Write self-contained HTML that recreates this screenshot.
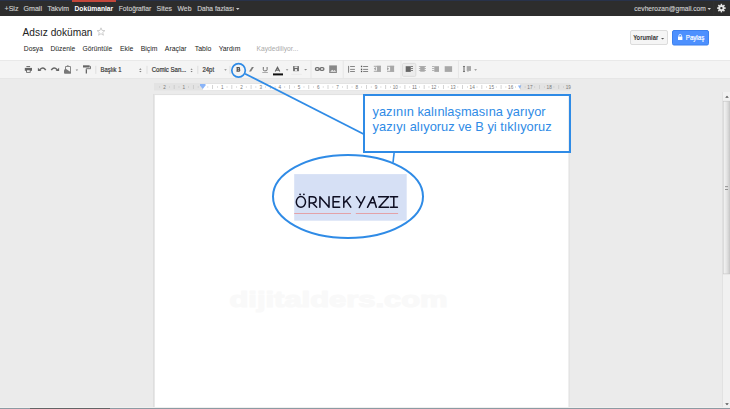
<!DOCTYPE html>
<html><head><meta charset="utf-8">
<style>
*{margin:0;padding:0}
html,body{width:730px;height:409px;overflow:hidden;background:#ebebeb}
svg{display:block;font-family:"Liberation Sans",sans-serif}
</style></head><body>
<svg width="730" height="409" viewBox="0 0 730 409">
<rect x="0" y="0" width="730" height="409" fill="#ebebeb"/>
<rect x="0" y="0" width="730" height="16" fill="#2d2d2d"/>
<rect x="0" y="0" width="730" height="1" fill="#28324a"/>
<rect x="72" y="0" width="44" height="2" fill="#c4473b"/>
<rect x="0" y="16" width="730" height="44" fill="#ffffff"/>
<rect x="0" y="60" width="730" height="18" fill="#f4f4f4"/>
<rect x="0" y="60" width="730" height="1" fill="#e9e9e9"/>
<rect x="0" y="78" width="730" height="1" fill="#e6e6e6"/>
<text x="4.5" y="11" font-size="7.8" fill="#cfcfcf" font-weight="normal" textLength="14" lengthAdjust="spacingAndGlyphs" stroke="#cfcfcf" stroke-width="0.15">+Siz</text>
<text x="23.5" y="11" font-size="7.8" fill="#cfcfcf" font-weight="normal" textLength="18.5" lengthAdjust="spacingAndGlyphs" stroke="#cfcfcf" stroke-width="0.15">Gmail</text>
<text x="47.5" y="11" font-size="7.8" fill="#cfcfcf" font-weight="normal" textLength="21.5" lengthAdjust="spacingAndGlyphs" stroke="#cfcfcf" stroke-width="0.15">Takvim</text>
<text x="118.7" y="11" font-size="7.8" fill="#cfcfcf" font-weight="normal" textLength="32.5" lengthAdjust="spacingAndGlyphs" stroke="#cfcfcf" stroke-width="0.15">Fotoğraflar</text>
<text x="156.6" y="11" font-size="7.8" fill="#cfcfcf" font-weight="normal" textLength="15.5" lengthAdjust="spacingAndGlyphs" stroke="#cfcfcf" stroke-width="0.15">Sites</text>
<text x="177.5" y="11" font-size="7.8" fill="#cfcfcf" font-weight="normal" textLength="14" lengthAdjust="spacingAndGlyphs" stroke="#cfcfcf" stroke-width="0.15">Web</text>
<text x="197.2" y="11" font-size="7.8" fill="#cfcfcf" font-weight="normal" textLength="36.9" lengthAdjust="spacingAndGlyphs" stroke="#cfcfcf" stroke-width="0.15">Daha fazlası</text>
<text x="634.3" y="11" font-size="7.8" fill="#cfcfcf" font-weight="normal" textLength="71.5" lengthAdjust="spacingAndGlyphs" stroke="#cfcfcf" stroke-width="0.15">cevherozan@gmail.com</text>
<text x="74.5" y="11" font-size="7.8" fill="#ffffff" font-weight="bold" textLength="38.7" lengthAdjust="spacingAndGlyphs">Dokümanlar</text>
<path d="M236 8h3.5l-1.75 2z" fill="#cfcfcf" stroke="none" stroke-width="1"/>
<path d="M707.5 8h3.5l-1.75 2z" fill="#cfcfcf" stroke="none" stroke-width="1"/>
<g transform="translate(721.4 8.1)"><circle r="2.15" fill="none" stroke="#e6e6e6" stroke-width="1.9"/><rect x="-0.75" y="-4.3" width="1.5" height="2" fill="#e6e6e6" transform="rotate(0)"/><rect x="-0.75" y="-4.3" width="1.5" height="2" fill="#e6e6e6" transform="rotate(45)"/><rect x="-0.75" y="-4.3" width="1.5" height="2" fill="#e6e6e6" transform="rotate(90)"/><rect x="-0.75" y="-4.3" width="1.5" height="2" fill="#e6e6e6" transform="rotate(135)"/><rect x="-0.75" y="-4.3" width="1.5" height="2" fill="#e6e6e6" transform="rotate(180)"/><rect x="-0.75" y="-4.3" width="1.5" height="2" fill="#e6e6e6" transform="rotate(225)"/><rect x="-0.75" y="-4.3" width="1.5" height="2" fill="#e6e6e6" transform="rotate(270)"/><rect x="-0.75" y="-4.3" width="1.5" height="2" fill="#e6e6e6" transform="rotate(315)"/></g>
<rect x="713.3" y="1" width="1" height="14" fill="#333"/>
<text x="22.5" y="35.8" font-size="10.3" fill="#222" font-weight="normal" textLength="70" lengthAdjust="spacingAndGlyphs">Adsız doküman</text>
<path d="M101.00 27.80 L102.06 30.44 L104.90 30.63 L102.71 32.46 L103.41 35.22 L101.00 33.70 L98.59 35.22 L99.29 32.46 L97.10 30.63 L99.94 30.44z" fill="none" stroke="#c8c8c8" stroke-width="0.9"/>
<text x="23.8" y="51" font-size="7.2" fill="#222" font-weight="normal" textLength="19.1" lengthAdjust="spacingAndGlyphs">Dosya</text>
<text x="50.5" y="51" font-size="7.2" fill="#222" font-weight="normal" textLength="24.7" lengthAdjust="spacingAndGlyphs">Düzenle</text>
<text x="82.6" y="51" font-size="7.2" fill="#222" font-weight="normal" textLength="29.6" lengthAdjust="spacingAndGlyphs">Görüntüle</text>
<text x="119.89999999999999" y="51" font-size="7.2" fill="#222" font-weight="normal" textLength="13.4" lengthAdjust="spacingAndGlyphs">Ekle</text>
<text x="140.7" y="51" font-size="7.2" fill="#222" font-weight="normal" textLength="16.7" lengthAdjust="spacingAndGlyphs">Biçim</text>
<text x="164.79999999999998" y="51" font-size="7.2" fill="#222" font-weight="normal" textLength="21.8" lengthAdjust="spacingAndGlyphs">Araçlar</text>
<text x="194.7" y="51" font-size="7.2" fill="#222" font-weight="normal" textLength="16.6" lengthAdjust="spacingAndGlyphs">Tablo</text>
<text x="218.7" y="51" font-size="7.2" fill="#222" font-weight="normal" textLength="21.7" lengthAdjust="spacingAndGlyphs">Yardım</text>
<text x="256.5" y="51" font-size="7.2" fill="#aaaaaa" font-weight="normal" textLength="41.8" lengthAdjust="spacingAndGlyphs">Kaydediliyor...</text>
<rect x="630.5" y="30.5" width="37" height="14" fill="#f5f5f5" stroke="#dcdcdc" stroke-width="1" rx="1.5"/>
<text x="633.2" y="39.8" font-size="6.6" fill="#333" font-weight="bold" textLength="25" lengthAdjust="spacingAndGlyphs">Yorumlar</text>
<path d="M661 38h3.2l-1.6 1.6z" fill="#555" stroke="none" stroke-width="1"/>
<rect x="672.5" y="30.5" width="36" height="14.5" fill="#4d90fe" stroke="#3d80ee" stroke-width="1" rx="1.5"/>
<text x="685.8" y="39.8" font-size="6.8" fill="#ffffff" font-weight="normal" textLength="18.4" lengthAdjust="spacingAndGlyphs" stroke="#fff" stroke-width="0.2">Paylaş</text>
<rect x="678" y="36.6" width="4.4" height="3.4" fill="#fff"/>
<path d="M678.9 36.8v-1.1a1.3 1.3 0 0 1 2.6 0v1.1" fill="none" stroke="#fff" stroke-width="0.8"/>
<rect x="26.4" y="66.1" width="3.7" height="1" fill="#666666"/>
<rect x="24.8" y="67.9" width="7.2" height="2.9" fill="#666666"/>
<rect x="26.6" y="69.9" width="3.6" height="2.4" fill="#fff" stroke="#555" stroke-width="0.8"/>
<path d="M37.9 67.8v3.1h3.5z" fill="#666666" stroke="none" stroke-width="1"/>
<path d="M39.8 69.7c2.2-2.2 4.4-2.2 5.9 0.5" fill="none" stroke="#666666" stroke-width="1.5"/>
<path d="M59.1 67.8v3.1h-3.5z" fill="#666666" stroke="none" stroke-width="1"/>
<path d="M57.2 69.7c-2.2-2.2-4.4-2.2-5.9 0.5" fill="none" stroke="#666666" stroke-width="1.5"/>
<path d="M65.5 69.8v-3.3h5v6.6h-5.6" fill="none" stroke="#888" stroke-width="1"/>
<path d="M66.3 66.3l1.5-1.3 1.5 1.3z" fill="#888" stroke="none" stroke-width="1"/>
<path d="M64 70.2l1.4-1.8 5.6 3.8v1.4h-7z" fill="#777" stroke="none" stroke-width="1"/>
<path d="M75.6 69.4h2.6l-1.3 1.5z" fill="#8a8a8a" stroke="none" stroke-width="1"/>
<rect x="83" y="65.3" width="6.6" height="2.2" fill="#666666"/>
<path d="M89.6 66.4h0.9v2.3h-4.2v1.2" fill="none" stroke="#666666" stroke-width="0.9"/>
<rect x="85.7" y="69.6" width="1.3" height="3.9" fill="#666666"/>
<rect x="95.3" y="65.8" width="1" height="8" fill="#dedede"/>
<rect x="146.5" y="65.8" width="1" height="8" fill="#dedede"/>
<rect x="197.3" y="65.8" width="1" height="8" fill="#dedede"/>
<rect x="229.5" y="65.8" width="1" height="8" fill="#dedede"/>
<rect x="310.5" y="60" width="1" height="18" fill="#e6e6e6"/>
<rect x="342.7" y="60" width="1" height="18" fill="#e6e6e6"/>
<rect x="400.5" y="60" width="1" height="18" fill="#e6e6e6"/>
<rect x="457.9" y="60" width="1" height="18" fill="#e6e6e6"/>
<text x="100.6" y="72.1" font-size="6.6" fill="#333" font-weight="normal" textLength="20.8" lengthAdjust="spacingAndGlyphs" stroke="#333" stroke-width="0.18">Başlık 1</text>
<path d="M139.1 69.7l1.25-1.4 1.25 1.4zM139.1 70.9l1.25 1.4 1.25-1.4z" fill="#777" stroke="none" stroke-width="1"/>
<text x="151.7" y="72.1" font-size="6.6" fill="#333" font-weight="normal" textLength="34.6" lengthAdjust="spacingAndGlyphs" stroke="#333" stroke-width="0.18">Comic San...</text>
<path d="M190.5 69.7l1.1-1.3 1.1 1.3zM190.5 70.9l1.1 1.3 1.1-1.3z" fill="#777" stroke="none" stroke-width="1"/>
<text x="202.5" y="72.1" font-size="6.6" fill="#333" font-weight="normal" textLength="11.6" lengthAdjust="spacingAndGlyphs" stroke="#333" stroke-width="0.18">24pt</text>
<path d="M224.2 69.3h2.6l-1.3 1.5z" fill="#8a8a8a" stroke="none" stroke-width="1"/>
<path d="M237.2 66.9V71.6M236.5 67.45H239A1 1 0 0 1 239 69.25H237.2M237.2 69.25H239.3A1.15 1.15 0 0 1 239.3 71.05H236.5" fill="none" stroke="#505050" stroke-width="1.15"/>
<path d="M251.9 67.1h2l-2.8 4.5h-2z" fill="#7a7a7a" stroke="none" stroke-width="1"/>
<path d="M263.3 67v2.7q0 1.1 1.1 1.1h1.6q1.1 0 1.1-1.1V67" fill="none" stroke="#6e6e6e" stroke-width="1.0"/>
<rect x="262.3" y="72" width="5.6" height="0.7" fill="#8a8a8a"/>
<path d="M275.2 71.5l2.3-4.3 2.3 4.3M276.1 70.1h2.8" fill="none" stroke="#666" stroke-width="1.1"/>
<rect x="273" y="73.4" width="10" height="2" fill="#111"/>
<path d="M285.8 69.2h2.6l-1.3 1.5z" fill="#8a8a8a" stroke="none" stroke-width="1"/>
<rect x="293.1" y="66.1" width="5.8" height="5.1" fill="#6a6a6a"/>
<rect x="294.5" y="66.5" width="3" height="1.4" fill="#f2f2f2"/>
<rect x="294.9" y="69.1" width="2.2" height="1.8" fill="#f2f2f2"/>
<rect x="291.2" y="73.8" width="10.7" height="1.1" fill="#ececec"/>
<path d="M304.1 69h3l-1.5 1.6z" fill="#8a8a8a" stroke="none" stroke-width="1"/>
<g fill="none" stroke="#707070" stroke-width="1.3"><rect x="315.4" y="67.7" width="3.8" height="2.7" rx="1.35"/><rect x="320.1" y="67.7" width="3.8" height="2.7" rx="1.35"/></g>
<rect x="318.6" y="68.6" width="2.1" height="0.9" fill="#707070"/>
<rect x="329.2" y="65.4" width="7.7" height="7.6" fill="#888"/>
<path d="M330.2 71.8l2-2 1.3 1.1 1.2-1 1.4 1.9z" fill="#eee" stroke="none" stroke-width="1"/>
<rect x="350.1" y="66.0" width="4.8" height="0.9" fill="#7a7a7a"/>
<rect x="350.1" y="68.9" width="4.8" height="0.9" fill="#7a7a7a"/>
<rect x="350.1" y="71.0" width="4.8" height="0.9" fill="#7a7a7a"/>
<rect x="348" y="65.9" width="1.1" height="6.8" fill="#888"/>
<rect x="360.9" y="65.75" width="1.3" height="1.4" fill="#555"/>
<rect x="363.1" y="66.0" width="5" height="0.9" fill="#7a7a7a"/>
<rect x="360.9" y="68.65" width="1.3" height="1.4" fill="#555"/>
<rect x="363.1" y="68.9" width="5" height="0.9" fill="#7a7a7a"/>
<rect x="360.9" y="70.75" width="1.3" height="1.4" fill="#555"/>
<rect x="363.1" y="71.0" width="5" height="0.9" fill="#7a7a7a"/>
<rect x="373.8" y="65.8" width="7.1" height="1" fill="#a8a8a8"/>
<rect x="373.8" y="70.8" width="7.1" height="1" fill="#a8a8a8"/>
<rect x="376.90000000000003" y="65.8" width="4" height="6" fill="#a8a8a8"/>
<path d="M375.8 67.1L373.90000000000003 68.8L375.8 70.5z" fill="#999" stroke="none" stroke-width="1"/>
<rect x="387.0" y="65.8" width="7.1" height="1" fill="#a8a8a8"/>
<rect x="387.0" y="70.8" width="7.1" height="1" fill="#a8a8a8"/>
<rect x="390.1" y="65.8" width="4" height="6" fill="#a8a8a8"/>
<path d="M387.1 67.1L389.0 68.8L387.1 70.5z" fill="#999" stroke="none" stroke-width="1"/>
<rect x="402.5" y="63.4" width="13.3" height="13" fill="#ececec" stroke="#d8d8d8" stroke-width="0.8" rx="1.2"/>
<rect x="405.7" y="66.2" width="5.1" height="5.7" fill="#666"/>
<rect x="410.8" y="66.2" width="2.2" height="0.8" fill="#666"/>
<rect x="410.8" y="68.1" width="2.2" height="0.8" fill="#666"/>
<rect x="410.8" y="70.0" width="2.2" height="0.8" fill="#666"/>
<rect x="420.2" y="66.2" width="4.5" height="5.5" fill="#a8a8a8"/>
<rect x="418.9" y="66.2" width="7.1" height="0.8" fill="#a8a8a8"/>
<rect x="418.9" y="68.1" width="7.1" height="0.8" fill="#a8a8a8"/>
<rect x="418.9" y="70.0" width="7.1" height="0.8" fill="#a8a8a8"/>
<rect x="434.3" y="66.2" width="4.7" height="5.7" fill="#a8a8a8"/>
<rect x="432" y="66.2" width="2.4" height="0.8" fill="#a8a8a8"/>
<rect x="432" y="68.1" width="2.4" height="0.8" fill="#a8a8a8"/>
<rect x="432" y="70.0" width="2.4" height="0.8" fill="#a8a8a8"/>
<rect x="444.7" y="66.2" width="7.4" height="5.7" fill="#a8a8a8"/>
<rect x="466.7" y="66.1" width="4.3" height="4.8" fill="#a8a8a8"/>
<rect x="467.1" y="70.9" width="1.6" height="0.7" fill="#a8a8a8"/>
<rect x="463.55" y="66.5" width="0.9" height="5" fill="#555"/>
<path d="M462.8 67.1h2.4l-1.2-1.25z" fill="#555" stroke="none" stroke-width="1"/>
<path d="M462.8 70.9h2.4l-1.2 1.25z" fill="#555" stroke="none" stroke-width="1"/>
<path d="M474.2 69.3h2.8l-1.4 1.5z" fill="#8a8a8a" stroke="none" stroke-width="1"/>
<rect x="154" y="83" width="416" height="7.5" fill="#e3e3e3"/>
<rect x="203" y="84" width="317" height="6" fill="#ffffff"/>
<text x="163.24" y="88.8" font-size="5.6" fill="#777" font-weight="normal" textLength="2.6" lengthAdjust="spacingAndGlyphs">2</text>
<text x="182.47" y="88.8" font-size="5.6" fill="#777" font-weight="normal" textLength="2.6" lengthAdjust="spacingAndGlyphs">1</text>
<text x="220.93" y="88.8" font-size="5.6" fill="#777" font-weight="normal" textLength="2.6" lengthAdjust="spacingAndGlyphs">1</text>
<text x="240.16" y="88.8" font-size="5.6" fill="#777" font-weight="normal" textLength="2.6" lengthAdjust="spacingAndGlyphs">2</text>
<text x="259.39" y="88.8" font-size="5.6" fill="#777" font-weight="normal" textLength="2.6" lengthAdjust="spacingAndGlyphs">3</text>
<text x="278.62" y="88.8" font-size="5.6" fill="#777" font-weight="normal" textLength="2.6" lengthAdjust="spacingAndGlyphs">4</text>
<text x="297.85" y="88.8" font-size="5.6" fill="#777" font-weight="normal" textLength="2.6" lengthAdjust="spacingAndGlyphs">5</text>
<text x="317.08" y="88.8" font-size="5.6" fill="#777" font-weight="normal" textLength="2.6" lengthAdjust="spacingAndGlyphs">6</text>
<text x="336.31" y="88.8" font-size="5.6" fill="#777" font-weight="normal" textLength="2.6" lengthAdjust="spacingAndGlyphs">7</text>
<text x="355.54" y="88.8" font-size="5.6" fill="#777" font-weight="normal" textLength="2.6" lengthAdjust="spacingAndGlyphs">8</text>
<text x="374.77" y="88.8" font-size="5.6" fill="#777" font-weight="normal" textLength="2.6" lengthAdjust="spacingAndGlyphs">9</text>
<text x="392.7" y="88.8" font-size="5.6" fill="#777" font-weight="normal" textLength="5.2" lengthAdjust="spacingAndGlyphs">10</text>
<text x="411.93" y="88.8" font-size="5.6" fill="#777" font-weight="normal" textLength="5.2" lengthAdjust="spacingAndGlyphs">11</text>
<text x="431.16" y="88.8" font-size="5.6" fill="#777" font-weight="normal" textLength="5.2" lengthAdjust="spacingAndGlyphs">12</text>
<text x="450.39" y="88.8" font-size="5.6" fill="#777" font-weight="normal" textLength="5.2" lengthAdjust="spacingAndGlyphs">13</text>
<text x="469.62" y="88.8" font-size="5.6" fill="#777" font-weight="normal" textLength="5.2" lengthAdjust="spacingAndGlyphs">14</text>
<text x="488.85" y="88.8" font-size="5.6" fill="#777" font-weight="normal" textLength="5.2" lengthAdjust="spacingAndGlyphs">15</text>
<text x="508.08" y="88.8" font-size="5.6" fill="#777" font-weight="normal" textLength="5.2" lengthAdjust="spacingAndGlyphs">16</text>
<text x="527.31" y="88.8" font-size="5.6" fill="#777" font-weight="normal" textLength="5.2" lengthAdjust="spacingAndGlyphs">17</text>
<text x="546.54" y="88.8" font-size="5.6" fill="#777" font-weight="normal" textLength="5.2" lengthAdjust="spacingAndGlyphs">18</text>
<text x="565.77" y="88.8" font-size="5.6" fill="#777" font-weight="normal" textLength="5.2" lengthAdjust="spacingAndGlyphs">19</text>
<rect x="173.75" y="85" width="0.8" height="4" fill="#c8c8c8"/>
<rect x="192.98" y="85" width="0.8" height="4" fill="#c8c8c8"/>
<rect x="212.22" y="85" width="0.8" height="4" fill="#c8c8c8"/>
<rect x="231.44" y="85" width="0.8" height="4" fill="#c8c8c8"/>
<rect x="250.67" y="85" width="0.8" height="4" fill="#c8c8c8"/>
<rect x="269.91" y="85" width="0.8" height="4" fill="#c8c8c8"/>
<rect x="289.13" y="85" width="0.8" height="4" fill="#c8c8c8"/>
<rect x="308.37" y="85" width="0.8" height="4" fill="#c8c8c8"/>
<rect x="327.6" y="85" width="0.8" height="4" fill="#c8c8c8"/>
<rect x="346.83" y="85" width="0.8" height="4" fill="#c8c8c8"/>
<rect x="366.06" y="85" width="0.8" height="4" fill="#c8c8c8"/>
<rect x="385.29" y="85" width="0.8" height="4" fill="#c8c8c8"/>
<rect x="404.51" y="85" width="0.8" height="4" fill="#c8c8c8"/>
<rect x="423.75" y="85" width="0.8" height="4" fill="#c8c8c8"/>
<rect x="442.98" y="85" width="0.8" height="4" fill="#c8c8c8"/>
<rect x="462.21" y="85" width="0.8" height="4" fill="#c8c8c8"/>
<rect x="481.44" y="85" width="0.8" height="4" fill="#c8c8c8"/>
<rect x="500.67" y="85" width="0.8" height="4" fill="#c8c8c8"/>
<rect x="519.9" y="85" width="0.8" height="4" fill="#c8c8c8"/>
<rect x="539.13" y="85" width="0.8" height="4" fill="#c8c8c8"/>
<rect x="558.36" y="85" width="0.8" height="4" fill="#c8c8c8"/>
<rect x="159.33" y="86.4" width="0.8" height="1.2" fill="#c4c4c4"/>
<rect x="168.95" y="86.4" width="0.8" height="1.2" fill="#c4c4c4"/>
<rect x="178.56" y="86.4" width="0.8" height="1.2" fill="#c4c4c4"/>
<rect x="188.18" y="86.4" width="0.8" height="1.2" fill="#c4c4c4"/>
<rect x="197.79" y="86.4" width="0.8" height="1.2" fill="#c4c4c4"/>
<rect x="207.41" y="86.4" width="0.8" height="1.2" fill="#c4c4c4"/>
<rect x="217.02" y="86.4" width="0.8" height="1.2" fill="#c4c4c4"/>
<rect x="226.64" y="86.4" width="0.8" height="1.2" fill="#c4c4c4"/>
<rect x="236.25" y="86.4" width="0.8" height="1.2" fill="#c4c4c4"/>
<rect x="245.87" y="86.4" width="0.8" height="1.2" fill="#c4c4c4"/>
<rect x="255.48" y="86.4" width="0.8" height="1.2" fill="#c4c4c4"/>
<rect x="265.1" y="86.4" width="0.8" height="1.2" fill="#c4c4c4"/>
<rect x="274.71" y="86.4" width="0.8" height="1.2" fill="#c4c4c4"/>
<rect x="284.33" y="86.4" width="0.8" height="1.2" fill="#c4c4c4"/>
<rect x="293.94" y="86.4" width="0.8" height="1.2" fill="#c4c4c4"/>
<rect x="303.56" y="86.4" width="0.8" height="1.2" fill="#c4c4c4"/>
<rect x="313.17" y="86.4" width="0.8" height="1.2" fill="#c4c4c4"/>
<rect x="322.79" y="86.4" width="0.8" height="1.2" fill="#c4c4c4"/>
<rect x="332.4" y="86.4" width="0.8" height="1.2" fill="#c4c4c4"/>
<rect x="342.02" y="86.4" width="0.8" height="1.2" fill="#c4c4c4"/>
<rect x="351.63" y="86.4" width="0.8" height="1.2" fill="#c4c4c4"/>
<rect x="361.25" y="86.4" width="0.8" height="1.2" fill="#c4c4c4"/>
<rect x="370.86" y="86.4" width="0.8" height="1.2" fill="#c4c4c4"/>
<rect x="380.48" y="86.4" width="0.8" height="1.2" fill="#c4c4c4"/>
<rect x="390.09" y="86.4" width="0.8" height="1.2" fill="#c4c4c4"/>
<rect x="399.71" y="86.4" width="0.8" height="1.2" fill="#c4c4c4"/>
<rect x="409.32" y="86.4" width="0.8" height="1.2" fill="#c4c4c4"/>
<rect x="418.94" y="86.4" width="0.8" height="1.2" fill="#c4c4c4"/>
<rect x="428.55" y="86.4" width="0.8" height="1.2" fill="#c4c4c4"/>
<rect x="438.17" y="86.4" width="0.8" height="1.2" fill="#c4c4c4"/>
<rect x="447.78" y="86.4" width="0.8" height="1.2" fill="#c4c4c4"/>
<rect x="457.4" y="86.4" width="0.8" height="1.2" fill="#c4c4c4"/>
<rect x="467.01" y="86.4" width="0.8" height="1.2" fill="#c4c4c4"/>
<rect x="476.63" y="86.4" width="0.8" height="1.2" fill="#c4c4c4"/>
<rect x="486.24" y="86.4" width="0.8" height="1.2" fill="#c4c4c4"/>
<rect x="495.86" y="86.4" width="0.8" height="1.2" fill="#c4c4c4"/>
<rect x="505.47" y="86.4" width="0.8" height="1.2" fill="#c4c4c4"/>
<rect x="515.09" y="86.4" width="0.8" height="1.2" fill="#c4c4c4"/>
<rect x="524.7" y="86.4" width="0.8" height="1.2" fill="#c4c4c4"/>
<rect x="534.32" y="86.4" width="0.8" height="1.2" fill="#c4c4c4"/>
<rect x="543.93" y="86.4" width="0.8" height="1.2" fill="#c4c4c4"/>
<rect x="553.55" y="86.4" width="0.8" height="1.2" fill="#c4c4c4"/>
<rect x="563.16" y="86.4" width="0.8" height="1.2" fill="#c4c4c4"/>
<path d="M200 84h5.5v1.6l-2.75 3.4-2.75-3.4z" fill="#8ab4f8" stroke="none" stroke-width="1"/>
<path d="M518 85.4h3.4l-1.7 3z" fill="#8ab4f8" stroke="none" stroke-width="1"/>
<rect x="153" y="94" width="416.5" height="320" fill="#dedede"/>
<rect x="154" y="94.6" width="415" height="320" fill="#e8e8e8"/>
<rect x="155" y="95.1" width="413.3" height="320" fill="#ffffff"/>
<text x="229.5" y="307" font-size="22" fill="#f9f9f9" font-weight="bold" textLength="218" lengthAdjust="spacingAndGlyphs" stroke="#f9f9f9" stroke-width="1.2" stroke-linejoin="round">dijitalders.com</text>
<rect x="294.2" y="174.1" width="112.5" height="46.6" fill="#d6e0f5"/>
<g fill="none" stroke="#0e0e22" stroke-width="1.5" stroke-linecap="round" stroke-linejoin="round">
<ellipse cx="300.9" cy="201.9" rx="4.6" ry="5.35"/>
<path d="M309.3 207.3V196.7H312.4C314.9 196.7 316.1 197.9 316.1 199.8C316.1 201.8 314.6 203 312.3 203H309.4M312.4 203L316.7 207.2" fill="none" stroke="#0e0e22" stroke-width="1.5"/>
<path d="M319.9 207.3V196.7L329 207.3V196.7" fill="none" stroke="#0e0e22" stroke-width="1.5"/>
<path d="M339.8 196.7H333.1V207.3H339.7M333.1 201.8H338.9" fill="none" stroke="#0e0e22" stroke-width="1.5"/>
<path d="M343.8 196.7V207.3M350.2 196.7L344 203.1M346.4 200.8L350.8 207.2" fill="none" stroke="#0e0e22" stroke-width="1.5"/>
<path d="M356.4 196.7L360.9 203.3M364.8 196.7L359.3 207.5" fill="none" stroke="#0e0e22" stroke-width="1.5"/>
<path d="M367.5 207.3L373 196.7L376.3 207.3M370.3 202.8H375.1" fill="none" stroke="#0e0e22" stroke-width="1.5"/>
<path d="M378.6 196.7H388.6L379 207.2H388.6" fill="none" stroke="#0e0e22" stroke-width="1.5"/>
<path d="M390.3 196.7H397.6M393.8 196.7V207.2M390.5 207.2H397.4" fill="none" stroke="#0e0e22" stroke-width="1.5"/>
</g>
<circle cx="300.1" cy="194.3" r="0.9" fill="#0e0e22"/><circle cx="303.9" cy="194.3" r="0.9" fill="#0e0e22"/>
<rect x="294.2" y="213" width="56.8" height="1" fill="#e3a2a8"/>
<rect x="355.8" y="213" width="42.3" height="1" fill="#e3a2a8"/>
<rect x="722" y="92" width="8" height="316" fill="#f1f1f1"/>
<rect x="722" y="92" width="1" height="316" fill="#e2e2e2"/>
<path d="M725.2 97.8h3.6l-1.8-2z" fill="#555" stroke="none" stroke-width="1"/>
<path d="M725.2 403.2h3.6l-1.8 2z" fill="#555" stroke="none" stroke-width="1"/>
<defs><linearGradient id="th" x1="0" x2="1" y1="0" y2="0"><stop offset="0" stop-color="#f6f6f6"/><stop offset="0.5" stop-color="#e4e4e4"/><stop offset="1" stop-color="#c9c9c9"/></linearGradient></defs>
<rect x="723.2" y="101.2" width="6.8" height="172.7" fill="url(#th)" stroke="#c2c2c2" stroke-width="0.6"/>
<rect x="725" y="186.2" width="3" height="0.9" fill="#8c8c8c"/>
<rect x="725" y="189" width="3" height="0.9" fill="#8c8c8c"/>
<rect x="0" y="408" width="730" height="1" fill="#8d9aa3"/>
<rect x="30" y="408" width="80" height="1" fill="#626466"/>
<rect x="0" y="407" width="730" height="1" fill="#f0f0ee"/>
<rect x="364" y="95" width="206" height="57" fill="none" stroke="#2f8be6" stroke-width="2"/>
<text x="372.6" y="116.4" font-size="13" fill="#2f8be6" font-weight="normal" textLength="173" lengthAdjust="spacingAndGlyphs">yazının kalınlaşmasına yarıyor</text>
<text x="372.6" y="131" font-size="13" fill="#2f8be6" font-weight="normal" textLength="179" lengthAdjust="spacingAndGlyphs">yazıyı alıyoruz ve B yi tıklıyoruz</text>
<ellipse cx="348" cy="196.5" rx="75" ry="41.55" fill="none" stroke="#2f8be6" stroke-width="2"/>
<path d="M394.2 152L393 162.7" fill="none" stroke="#2f8be6" stroke-width="1.6"/>
<circle cx="238.55" cy="70.3" r="6.75" fill="none" stroke="#2f8be6" stroke-width="1.7"/>
<path d="M245 73.7L364 134.3" fill="none" stroke="#2f8be6" stroke-width="1.8"/>
</svg>
</body></html>
